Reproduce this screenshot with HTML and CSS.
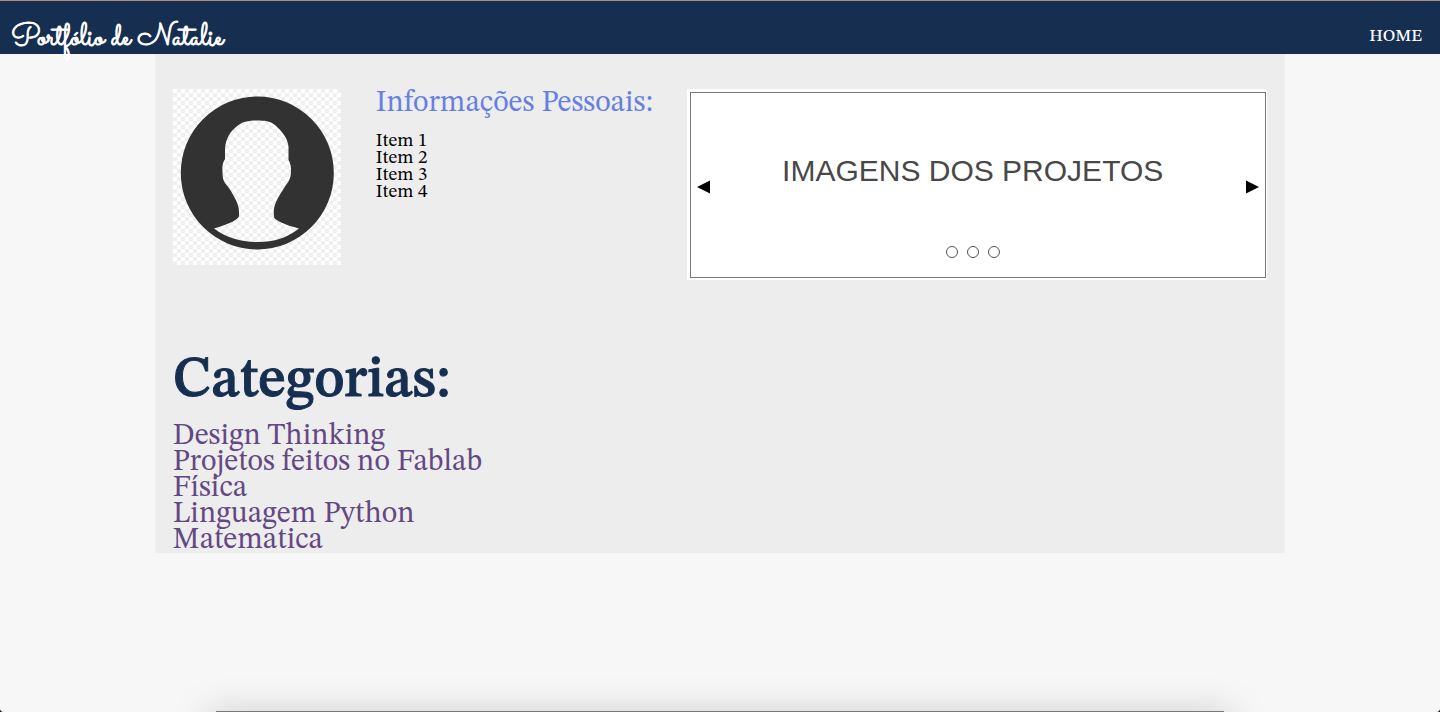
FILE: index.html
```html
<!DOCTYPE html>
<html lang="pt-BR">
<head>
<meta charset="utf-8">
<meta name="viewport" content="width=device-width, initial-scale=1">
<title>Portfólio de Natalie</title>
<link rel="stylesheet" href="styles.css">
</head>
<body>
<header class="topbar">
  <a class="brand" href="#">Portfólio de Natalie</a>
  <nav><a class="nav-link" href="#">HOME</a></nav>
</header>
<main class="panel">
  <section class="intro">
    <svg class="avatar" viewBox="0 0 168 176" role="img" aria-label="Foto de perfil">
      <defs>
        <pattern id="checker" width="8" height="8" patternUnits="userSpaceOnUse">
          <rect width="8" height="8" fill="#fff"/>
          <path d="M4 0h4v4h-4zM0 4h4v4h-4z" fill="#efefef"/>
        </pattern>
      </defs>
      <rect width="168" height="176" fill="url(#checker)"/>
      <path fill="#323232" d="M84.300 7.500a76.200 76.200 0 1 1 0 153a76.200 76.200 0 1 1 0-153z"/>
      <path fill="url(#checker)" d="M84 31.500C74 31.500 68 33 62 39C55 45 52 53 52 62V70C49.500 74 49 78 49.500 82C49.500 90 50 92 56 99C62 109 66 115 66 123V127C66 130 57 135 41 139.500C54 149 68 153 85 153C101 153 114 149 126 139.500C112 136 101 131 101 128C100 117 102 113 113 96C117 91 118 88 118 80C118 77 117 73 115.500 71V58C115 50 110 43 102 36C97 32 91 31.500 84 31.500z"/>
    </svg>
    <div class="info">
      <h2 class="info-title">Informações Pessoais:</h2>
      <ul class="info-list">
        <li>Item 1</li>
        <li>Item 2</li>
        <li>Item 3</li>
        <li>Item 4</li>
      </ul>
    </div>
    <div class="carousel">
      <div class="frame">
        <button class="arrow" type="button" aria-label="Anterior"><svg width="14" height="14" viewBox="0 0 14 14"><path d="M0 7L13 .5v13z"/></svg></button>
        <div class="slide">
          <p class="slide-title">IMAGENS DOS PROJETOS</p>
          <div class="dots">
            <button class="dot" type="button" aria-label="Imagem 1"></button>
            <button class="dot" type="button" aria-label="Imagem 2"></button>
            <button class="dot" type="button" aria-label="Imagem 3"></button>
          </div>
        </div>
        <button class="arrow" type="button" aria-label="Próxima"><svg width="14" height="14" viewBox="0 0 14 14"><path d="M14 7L1 .5v13z"/></svg></button>
      </div>
    </div>
  </section>
  <section class="categories">
    <h1 class="categories-title">Categorias:</h1>
    <ul class="category-list">
      <li><a href="#">Design Thinking</a></li>
      <li><a href="#">Projetos feitos no Fablab</a></li>
      <li><a href="#">Física</a></li>
      <li><a href="#">Linguagem Python</a></li>
      <li><a href="#">Matematica</a></li>
    </ul>
  </section>
</main>
<div class="window-edge"></div>
<div class="dock"></div>
</body>
</html>
```

FILE: styles.css
```css
* {
  box-sizing: border-box;
  margin: 0;
  padding: 0;
}

body {
  min-height: 100vh;
  background: #f7f7f7;
  color: #000;
  font-family: "STIX Two Text", "Liberation Serif", "Times New Roman", serif;
}

a {
  color: inherit;
  text-decoration: none;
}

ul {
  list-style: none;
}

.topbar {
  display: flex;
  justify-content: space-between;
  align-items: flex-end;
  height: 54px;
  padding: 0 18px 0 11px;
  border-top: 1px solid #b48a86;
  background: #162e50;
  color: #fff;
}

.brand {
  font-family: "Sacramento", "Great Vibes", "Liberation Serif", serif;
  font-size: 31px;
  line-height: 30px;
  -webkit-text-stroke: 1px #fff;
}

.nav-link {
  display: block;
  font-size: 17px;
  font-weight: 500;
  line-height: 34px;
}

.panel {
  width: 78.5%;
  margin: 0 auto;
  padding: 35px 18px 0;
  background: #ededed;
}

.intro {
  display: flex;
  align-items: flex-start;
}

.avatar {
  flex: none;
  width: 168px;
  height: 176px;
  margin-right: 35px;
}

.info {
  flex: 1;
  white-space: nowrap;
}

.info-title {
  color: #6680df;
  font-size: 30px;
  font-weight: 400;
  line-height: 28px;
}

.info-list {
  margin-top: 16px;
  font-size: 19px;
  line-height: 17px;
}

.carousel {
  width: 53%;
  padding: 3px 1px 2px 3px;
  background: #fff;
}

.frame {
  display: flex;
  align-items: center;
  height: 186px;
  padding: 0 6px;
  border: 1px solid #777;
}

.arrow {
  display: flex;
  border: 0;
  background: none;
  padding-top: 4px;
}

.slide {
  flex: 1;
  display: flex;
  flex-direction: column;
  align-items: center;
  gap: 57px;
  padding: 40px 11px 0 0;
}

.slide-title {
  color: #484848;
  font-family: "Liberation Sans", Arial, sans-serif;
  font-size: 30px;
  line-height: 36px;
}

.dots {
  display: flex;
  gap: 9px;
}

.dot {
  width: 12px;
  height: 12px;
  border: 1px solid #555;
  border-radius: 50%;
  background: #fff;
}

.categories {
  margin-top: 72px;
}

.categories-title {
  color: #162e50;
  font-size: 57px;
  font-weight: 500;
  line-height: 60px;
  -webkit-text-stroke: 1px #162e50;
}

.category-list {
  margin-top: 11px;
  color: #644883;
  font-size: 30px;
  line-height: 26px;
}

.window-edge {
  position: fixed;
  inset: auto 0 0;
  height: 5px;
  background:
    radial-gradient(circle at 100% 0, transparent 5px, #222 6px) left / 5px 5px no-repeat,
    radial-gradient(circle at 0 0, transparent 5px, #222 6px) right / 5px 5px no-repeat;
}

.dock {
  position: fixed;
  bottom: 0;
  left: 15%;
  right: 15%;
  height: 1px;
  background: #777;
  box-shadow: 0 12px 36px 8px rgba(0, 0, 0, 0.25);
}
```
